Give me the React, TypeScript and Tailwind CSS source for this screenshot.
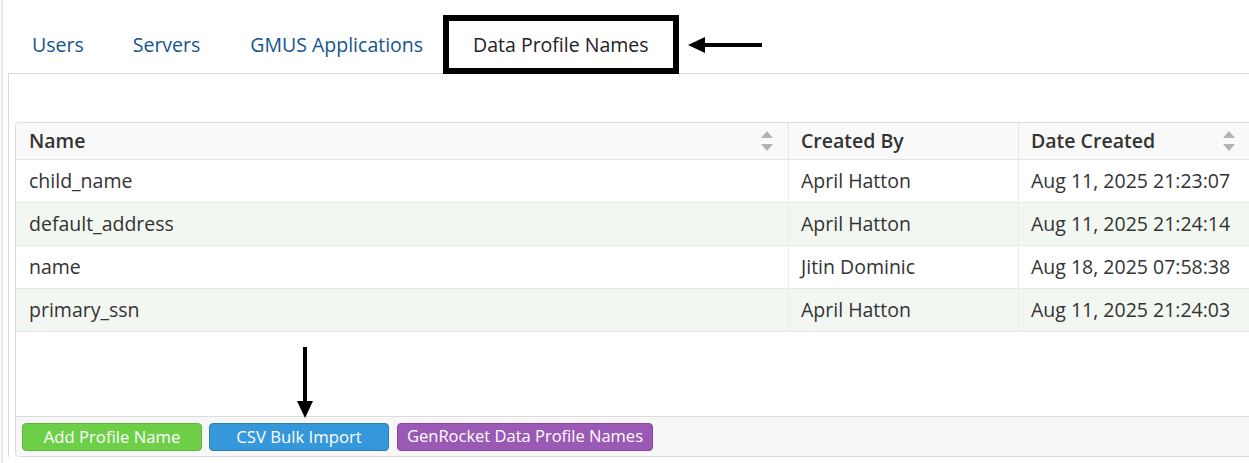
import React from "react";

const SortIcon = () => (
  <svg width="14" height="22" viewBox="0 0 14 22" className="shrink-0">
    <path d="M7 1 L13 8 L1 8 Z" fill="#b3b3b3" />
    <path d="M7 21 L13 14 L1 14 Z" fill="#b3b3b3" />
  </svg>
);

const rows = [
  { name: "child_name", by: "April Hatton", date: "Aug 11, 2025 21:23:07" },
  { name: "default_address", by: "April Hatton", date: "Aug 11, 2025 21:24:14" },
  { name: "name", by: "Jitin Dominic", date: "Aug 18, 2025 07:58:38" },
  { name: "primary_ssn", by: "April Hatton", date: "Aug 11, 2025 21:24:03" },
];

export default function App() {
  return (
    <div
      className="relative w-[1249px] h-[463px] overflow-hidden bg-white text-[#333]"
      style={{ fontFamily: '"Open Sans", "Liberation Sans", sans-serif' }}
    >
      <div className="ml-[1px] h-full border-l-[2px] border-[#e4e7eb] pl-[5px]">
        {/* Tabs */}
        <div className="flex items-stretch pt-[15px] border-b border-[#d9d9d9] w-[1300px]">
          <div className="flex h-[59px] mb-[-1px] items-center">
            <div className="px-[24px] text-[19.5px] text-[#15558f]">Users</div>
            <div className="px-[25px] text-[19.5px] text-[#15558f]">Servers</div>
            <div className="px-[25px] text-[19.5px] text-[#15558f]">GMUS Applications</div>
            <div className="ml-[-5px] h-full flex items-center border-[6px] border-black bg-white px-[24px] text-[19.5px] text-[#222]">
              Data Profile Names
            </div>
          </div>
        </div>

        {/* Panel */}
        <div className="border-l border-[#d9d9d9] pl-[6px] pt-[48px] w-[1300px]">
          <div className="w-[1260px] rounded-[4px] border border-[#dcdcdc] overflow-hidden">
            <div className="grid grid-cols-[773px_230px_255px]">
              {/* header */}
              <div className="flex h-[37px] items-center justify-between bg-[#f9f9f9] pl-[13px] pr-[14px] border-b border-[#e6e6e6] border-r border-r-[#e6e6e6]">
                <span className="text-[19.5px] font-semibold text-[#333]">Name</span>
                <SortIcon />
              </div>
              <div className="flex h-[37px] items-center bg-[#f9f9f9] pl-[12px] border-b border-[#e6e6e6] border-r border-r-[#e6e6e6]">
                <span className="text-[19.5px] font-semibold text-[#333]">Created By</span>
              </div>
              <div className="flex h-[37px] items-center justify-between bg-[#f9f9f9] pl-[12px] pr-[38px] border-b border-[#e6e6e6]">
                <span className="text-[19.5px] font-semibold text-[#333]">Date Created</span>
                <SortIcon />
              </div>
              {rows.map((r, i) => {
                const bg = i % 2 === 1 ? "bg-[#f3f7f1]" : "bg-white";
                return (
                  <React.Fragment key={r.name}>
                    <div className={`flex h-[43px] items-center pl-[13px] border-b border-[#e8e8e8] border-r border-r-[#ececec] text-[19.5px] ${bg}`}>
                      {r.name}
                    </div>
                    <div className={`flex h-[43px] items-center pl-[12px] border-b border-[#e8e8e8] border-r border-r-[#ececec] text-[19.5px] ${bg}`}>
                      {r.by}
                    </div>
                    <div className={`flex h-[43px] items-center pl-[12px] border-b border-[#e8e8e8] text-[19.5px] ${bg}`}>
                      {r.date}
                    </div>
                  </React.Fragment>
                );
              })}
            </div>
            <div className="h-[84px] bg-white" />
            <div className="flex h-[40px] items-center gap-[7px] border-t border-[#dcdcdc] bg-[#f7f7f7] pl-[6px]">
              <button className="flex h-[28px] w-[180px] items-center justify-center rounded-[4px] border border-[#5cb83b] bg-[#6dcf48] text-[16.7px] text-white">
                Add Profile Name
              </button>
              <button className="flex h-[28px] w-[180px] items-center justify-center rounded-[4px] border border-[#2a80b9] bg-[#3498db] text-[16.7px] text-white">
                CSV Bulk Import
              </button>
              <button className="ml-[1px] flex h-[28px] items-center justify-center rounded-[4px] border border-[#8e44ad] bg-[#9b59b6] px-[9px] text-[16.5px] text-white">
                GenRocket Data Profile Names
              </button>
            </div>
          </div>
        </div>
      </div>

      {/* annotation arrows */}
      <svg className="absolute left-[686px] top-[35px]" width="76" height="20" viewBox="0 0 76 20">
        <rect x="16" y="8" width="60" height="4" fill="#000" />
        <path d="M2 10 L19 2 L19 18 Z" fill="#000" />
      </svg>
      <svg className="absolute left-[295px] top-[347px]" width="20" height="73" viewBox="0 0 20 73">
        <rect x="8" y="0" width="4" height="58" fill="#000" />
        <path d="M10 71 L2 54 L18 54 Z" fill="#000" />
      </svg>
    </div>
  );
}
